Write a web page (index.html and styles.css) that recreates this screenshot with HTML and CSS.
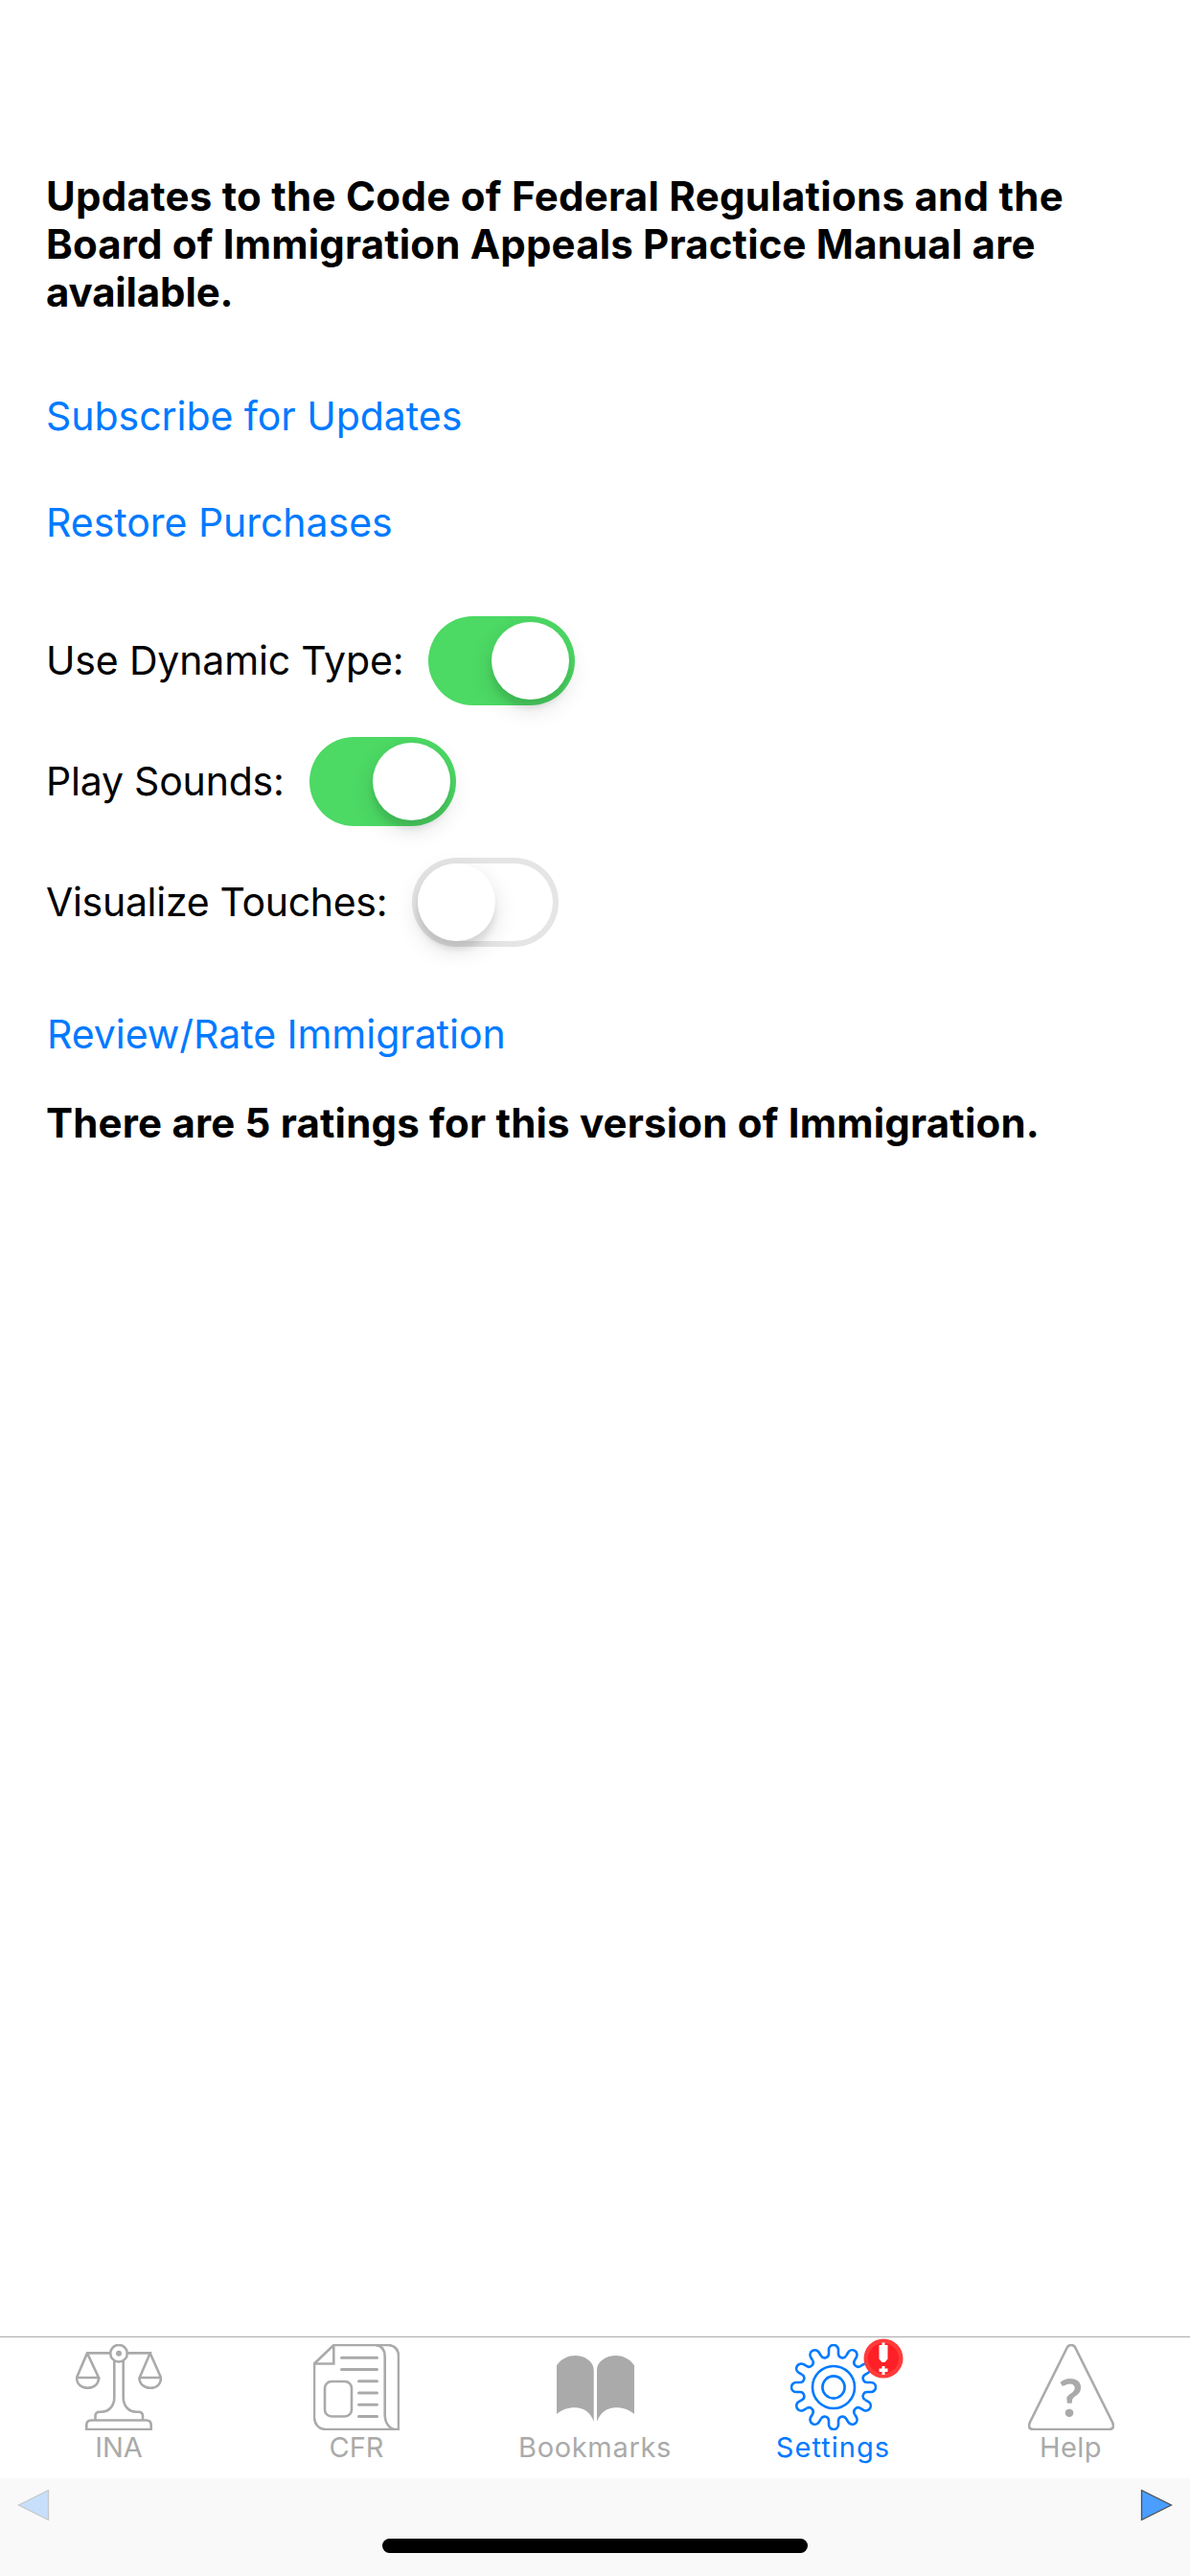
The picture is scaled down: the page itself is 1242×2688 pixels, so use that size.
FILE: index.html
```html
<!DOCTYPE html>
<html lang="en">
<head>
<meta charset="utf-8">
<title>Settings</title>
<link rel="stylesheet" href="styles.css">
</head>
<body>
<div class="screen">
  <main class="content">
    <h1 class="notice">
      <span class="notice-line line-a">Updates to the Code of Federal Regulations and the</span>
      <span class="notice-line line-b">Board of Immigration Appeals Practice Manual are</span>
      <span class="notice-line line-c">available.</span>
    </h1>
    <a class="link subscribe">Subscribe for Updates</a>
    <a class="link restore">Restore Purchases</a>
    <div class="options">
      <div class="option"><span class="option-label label-type">Use Dynamic Type:</span><span class="switch on"><span class="knob"></span></span></div>
      <div class="option"><span class="option-label label-sounds">Play Sounds:</span><span class="switch on"><span class="knob"></span></span></div>
      <div class="option"><span class="option-label label-touches">Visualize Touches:</span><span class="switch"><span class="knob"></span></span></div>
    </div>
    <a class="link review">Review/Rate Immigration</a>
    <p class="ratings">There are 5 ratings for this version of Immigration.</p>
  </main>

  <nav class="tabs">
    <a class="tab">
      <svg class="icon" viewBox="0 0 90 90">
        <circle cx="45" cy="9.7" r="8.8"/><circle class="solid" cx="45" cy="9.7" r="3"/>
        <path d="M36 9.4H12L1 35H24L12 9.4M54 9.4H77.7L66.7 35H89L77.7 9.4"/>
        <path d="M1 35C1 42 6 45.8 12.5 45.8S24 42 24 35M66.5 35C66.5 42 71.5 45.8 78 45.8S89 42 89 35"/>
        <path d="M40.300 17.500V56C40.300 65 34 70.700 27 70.700H25Q20.500 70.700 20.500 75V79.500M49.700 17.500V56C49.700 65 56 70.700 63 70.700H65.500Q70 70.700 70 75V79.500"/>
        <path d="M11.300 89V84.500Q11.300 79.500 16.300 79.500H73.700Q78.700 79.500 78.700 84.500V89Z"/>
      </svg>
      <span class="tab-label ina">INA</span>
    </a>
    <a class="tab">
      <svg class="icon" viewBox="0 0 90 90">
        <path d="M1 20.500L21.300 1H78.500Q89 2 89 13V89H12.500Q2 88 1 77ZM1 20.500H21.300V1"/>
        <path d="M65 1Q74.700 2 74.700 13V75Q75.500 86 84 89"/>
        <rect x="12" y="39" width="28" height="36.500" rx="7"/>
        <path class="lines" d="M29.500 14.300H66.500M29.500 26.500H66.500M47.500 38.700H66.500M47.500 51H66.500M47.500 63.300H66.500M47.500 75.500H66.500"/>
      </svg>
      <span class="tab-label cfr">CFR</span>
    </a>
    <a class="tab">
      <svg class="icon" viewBox="0 0 90 90">
        <path class="solid" d="M5 22.300C10 15 17.500 12 24.300 12C34 12 43.700 18 43.700 27V80.700C40 71 33 66.300 24.300 66.300C16 66.300 10 69 5 73ZM86 22.300C81 15 73.500 12 66.700 12C57 12 47 18 47 27V80.700C51 71 58 66.300 66.700 66.300C75 66.300 81 69 86 73Z"/>
      </svg>
      <span class="tab-label bookmarks">Bookmarks</span>
    </a>
    <a class="tab active">
      <svg class="icon" viewBox="0 0 90 90">
        <defs><path id="tooth" d="M-5-35V-39A5 5 0 0 1 5-39V-35A4.400 4.400 0 0 0 13.170-32.800"/></defs>
        <circle cx="45" cy="45" r="22"/><circle cx="45" cy="45" r="11.600"/>
        <g transform="translate(45 45)">
          <use href="#tooth"/><use href="#tooth" transform="rotate(30)"/><use href="#tooth" transform="rotate(60)"/>
          <use href="#tooth" transform="rotate(90)"/><use href="#tooth" transform="rotate(120)"/><use href="#tooth" transform="rotate(150)"/>
          <use href="#tooth" transform="rotate(180)"/><use href="#tooth" transform="rotate(210)"/><use href="#tooth" transform="rotate(240)"/>
          <use href="#tooth" transform="rotate(270)"/><use href="#tooth" transform="rotate(300)"/><use href="#tooth" transform="rotate(330)"/>
        </g>
      </svg>
      <svg class="badge" viewBox="0 0 42 42">
        <circle class="badge-rim" cx="21" cy="21" r="20.500"/><circle class="badge-fill" cx="21" cy="21" r="16"/>
        <path class="badge-mark" d="M19.500 4.500H22.500V7H25.500V21.500L22.500 25H19.500L16.500 21.500V7H19.500ZM19.500 29H22.500V31.500H25.500V35H22.500V38H19.500V35H16.500V31.500H19.500Z"/>
      </svg>
      <span class="tab-label settings">Settings</span>
    </a>
    <a class="tab">
      <svg class="icon" viewBox="0 0 90 90">
        <path d="M40.800 3.500Q42.200 1 45 1T49.200 3.500L88 81.500Q91 89 84.500 89H5.500Q-1 89 2 81.500Z"/>
        <text class="question" x="44.500" y="76" text-anchor="middle">?</text>
      </svg>
      <span class="tab-label help">Help</span>
    </a>
  </nav>

  <footer class="footer">
    <div class="arrows">
      <svg class="arrow back" viewBox="0 0 34 34"><path d="M1.500 17L32.500 1.500V32.500Z"/></svg>
      <svg class="arrow" viewBox="0 0 34 34"><path d="M1.500 1.500L32.500 17L1.500 32.500Z"/></svg>
    </div>
    <div class="home-bar"></div>
  </footer>
</div>
</body>
</html>
```

FILE: styles.css
```css
* { box-sizing: border-box; }

body {
  margin: 0;
  background: #fff;
  color: #000;
  font-family: Inter, "Liberation Sans", sans-serif;
}

.screen {
  display: flex;
  flex-direction: column;
  width: 1242px;
  height: 2688px;
}

.content {
  flex: 1;
  display: flex;
  flex-direction: column;
  align-items: flex-start;
  padding: 180px 48px 0;
  font-size: 41px;
  line-height: 50px;
  white-space: nowrap;
}

.notice, .ratings { margin: 0; font-size: 42px; font-weight: 700; }
.notice-line { display: block; }
.line-a { letter-spacing: 0.28px; }
.line-b { letter-spacing: 0.17px; }
.line-c { letter-spacing: -0.15px; }

.link { color: #007aff; }
.subscribe { margin-top: 79px; letter-spacing: -0.04px; }
.restore { margin-top: 61px; letter-spacing: -0.03px; }
.review { margin: 66px 0 0 1px; letter-spacing: -0.04px; }
.ratings { margin-top: 43px; letter-spacing: 0.19px; }

.options {
  display: flex;
  flex-direction: column;
  gap: 33px;
  margin-top: 73px;
}
.option { display: flex; align-items: center; gap: 26px; height: 93px; }
.option-label { padding-bottom: 1px; }
.label-type { letter-spacing: -0.16px; }
.label-sounds { letter-spacing: -0.2px; }
.label-touches { letter-spacing: -0.3px; }

.switch {
  display: flex;
  width: 153px;
  height: 93px;
  padding: 6px;
  border-radius: 47px;
  box-shadow: inset 0 0 0 6px #e5e5e5;
}
.switch.on {
  justify-content: flex-end;
  background: #4cd964;
  box-shadow: none;
}
.knob {
  width: 81px;
  height: 81px;
  border-radius: 50%;
  background: #fff;
  box-shadow: 0 9px 24px rgba(0, 0, 0, 0.13), 0 9px 6px rgba(0, 0, 0, 0.08);
}

.tabs {
  display: grid;
  grid-template-columns: 248px 248px 250px 247px 249px;
  height: 148px;
  padding-top: 7px;
  border-top: 1px solid #acacac;
}
.tab {
  position: relative;
  display: flex;
  flex-direction: column;
  align-items: center;
  color: #aaa;
}
.tab.active { color: #007aff; }
.icon {
  width: 90px;
  height: 90px;
  fill: none;
  stroke: currentColor;
  stroke-width: 2.6;
}
.icon .solid { fill: currentColor; stroke: none; }
.icon .lines { stroke-width: 3; stroke-linecap: round; }
.question {
  fill: currentColor;
  stroke: none;
  font: 700 56px Lato, sans-serif;
}
.tab-label { font-size: 29px; line-height: 35px; }
.bookmarks { letter-spacing: 0.67px; }
.settings { letter-spacing: 1.04px; }
.help { letter-spacing: 0.5px; }

.badge {
  position: absolute;
  left: 155px;
  top: -6px;
  width: 42px;
  height: 42px;
}
.badge-rim { fill: #ff3b3b; }
.badge-fill { fill: #ff1f26; }
.badge-mark { fill: #fff; }

.footer {
  display: flex;
  flex-direction: column;
  align-items: center;
  height: 102px;
  padding: 11px 18px 0;
  background: #f9f9f9;
}
.arrows {
  display: flex;
  justify-content: space-between;
  width: 100%;
  height: 34px;
}
.arrow {
  width: 34px;
  height: 34px;
  fill: #4a9eff;
  stroke: #505050;
  stroke-width: 1.3;
}
.arrow.back { fill: #c7dffb; stroke: #c6c8ca; }
.home-bar {
  width: 444px;
  height: 15px;
  margin-top: 18px;
  border-radius: 8px;
  background: #000;
}
```
